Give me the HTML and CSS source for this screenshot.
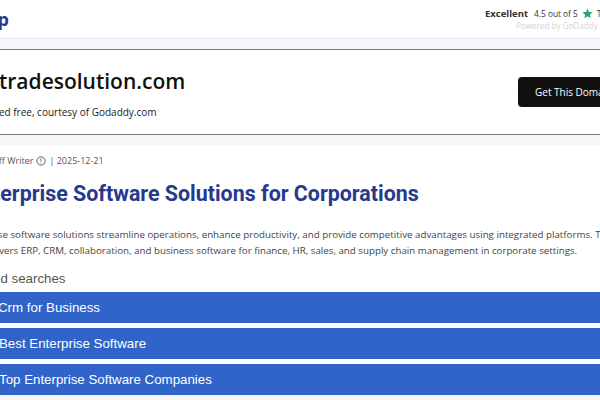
FILE: index.html
```html
<!DOCTYPE html>
<html lang="en">
<head>
<meta charset="utf-8">
<title>Enterprise Software Solutions for Corporations</title>
<link rel="stylesheet" href="styles.css">
</head>
<body>
<div class="page">
  <header class="topbar">
    <div class="logo">Top</div>
    <div class="rating">
      <div class="rating-main">
        <strong class="excellent">Excellent</strong>
        <span class="score">4.5 out of 5</span>
        <svg class="star" viewBox="0 0 24 24" width="11" height="11"><path d="M12 1l3.100 7.600 8.200.6-6.300 5.300 2 8L12 18.200l-7 4.300 2-8L.7 9.200l8.200-.6z" fill="#1fa67a"/></svg>
        <span class="score">Trustpilot</span>
      </div>
      <div class="powered">Powered by GoDaddy</div>
    </div>
  </header>
  <div class="strip"></div>
  <section class="banner">
    <div class="banner-text">
      <h2 class="domain">tradesolution.com</h2>
      <p class="parked">Parked free, courtesy of Godaddy.com</p>
    </div>
    <a class="get-domain">Get This Domain</a>
  </section>
  <div class="strip-plain"></div>
  <main class="article">
    <div class="meta">
      <span>By Staff Writer</span>
      <svg class="info" viewBox="0 0 12 12" width="10" height="10"><circle cx="6" cy="6" r="5" fill="none" stroke="#555" stroke-width="1.100"/><path d="M6 3v3.500M6 8v1" stroke="#555" stroke-width="1.100" fill="none"/></svg>
      <span>| 2025-12-21</span>
    </div>
    <h1 class="title">Enterprise Software Solutions for Corporations</h1>
    <p class="summary">Enterprise software solutions streamline operations, enhance productivity, and provide competitive advantages using integrated platforms. This guide covers ERP, CRM, collaboration, and business software for finance, HR, sales, and supply chain management in corporate settings.</p>
    <h3 class="related">Related searches</h3>
  </main>
  <nav class="searches">
    <a class="search-bar crm">Crm for Business</a>
    <a class="search-bar">Best Enterprise Software</a>
    <a class="search-bar">Top Enterprise Software Companies</a>
  </nav>
  <div class="foot"></div>
</div>
</body>
</html>
```
FILE: styles.css
```css
html, body { margin: 0; padding: 0; background: #fff; overflow: hidden; height: 400px; }
.page { width: 800px; margin-left: -46px; font-family: "Open Sans", sans-serif; color: #222; }
.topbar { height: 38px; display: flex; justify-content: space-between; padding-right: 119px; box-sizing: border-box; }
.logo { font: 700 18px/38px "Open Sans", sans-serif; color: #26398c; margin-left: 22px; }
.rating { padding-top: 5px; width: 150px; flex: none; }
.rating-main { display: flex; align-items: center; gap: 4px; height: 16px; white-space: nowrap; font-size: 8.300px; color: #333; }
.excellent { font-size: 9.500px; font-weight: 700; margin-right: 2px; }
.star { flex: none; }
.powered { font-size: 8.100px; color: #d4d4d4; line-height: 12px; margin-top: -1px; margin-left: 31px; white-space: nowrap; }
.strip { height: 12px; background: #f5f6f9; border-top: 1px solid #e8e9ee; border-bottom: 1px solid #777; box-sizing: border-box; }
.banner { height: 85px; display: flex; justify-content: space-between; align-items: flex-start; box-sizing: border-box; border-bottom: 1px solid #777; padding-right: 106px; padding-left: 45px; }
.strip-plain { height: 10px; background: #f5f6f9; }
.domain { margin: 16px 0 0; font-size: 21px; font-weight: 600; line-height: 30px; color: #111; }
.parked { margin: 9px 0 0 -21px; font-size: 10px; line-height: 15px; color: #222; }
.get-domain { margin-top: 27px; width: 130px; height: 30px; box-sizing: border-box; flex: none; background: #111; color: #fff; border-radius: 4px; font-size: 10px; line-height: 30px; padding-left: 17px; white-space: nowrap; }
.article { padding-top: 9px; }
.meta { display: flex; align-items: center; gap: 3px; font-size: 9px; line-height: 14px; color: #555; height: 14px; margin-left: 19px; }
.title { font: 700 21.400px/28px Roboto, sans-serif; color: #26398c; margin: 12px 0 0 15px; }
.summary { width: 668px; margin: 19px 0 0 7px; font-size: 9.750px; line-height: 16px; color: #444; }
.related { font: 400 13.300px/18px "Liberation Sans", sans-serif; color: #555; margin: 11px 0 0 8px; }
.searches { display: flex; flex-direction: column; gap: 5px; margin-top: 4px; }
.search-bar { height: 31px; background: #3064c8; color: #fff; font: 400 13.300px/32px "Liberation Sans", sans-serif; padding-left: 45px; box-sizing: border-box; }
.crm { padding-left: 44px; }
.foot { height: 5px; background: #f6f6f8; }
```
